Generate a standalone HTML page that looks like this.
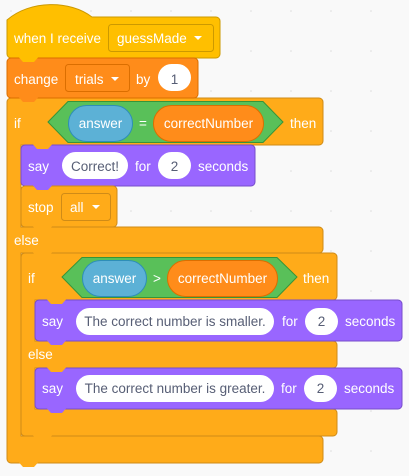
<!DOCTYPE html>
<html><head><meta charset="utf-8"><style>
html,body{margin:0;padding:0;background:#f9f9f9;}
svg{display:block;font-family:"Liberation Sans",Arial,sans-serif;font-size:13.5px;}
.w{fill:#fff;}
.d{fill:#575e75;}
</style></head><body>
<svg width="409" height="476" viewBox="0 0 409 476" xmlns="http://www.w3.org/2000/svg">
<defs>
<pattern id="dots" width="40" height="40" patternUnits="userSpaceOnUse" x="10" y="10">
<circle cx="1" cy="1" r="0.8" fill="#dcdcdc"/>
</pattern>
</defs>
<rect width="409" height="476" fill="#f9f9f9"/>
<rect width="409" height="476" fill="url(#dots)"/>

<path d="M7 102 a4 4 0 0 1 4 -4 H319 a4 4 0 0 1 4 4 V141 a4 4 0 0 1 -4 4 H21 V227 H319 a4 4 0 0 1 4 4 V249 a4 4 0 0 1 -4 4 H21 V436 H319 a4 4 0 0 1 4 4 V459 a4 4 0 0 1 -4 4 H11 a4 4 0 0 1 -4 -4 Z" fill="#FFAB19" stroke="#CF8B17"/>
<path d="M21 257 a4 4 0 0 1 4 -4 H333 a4 4 0 0 1 4 4 V296 a4 4 0 0 1 -4 4 H35 V341 H333 a4 4 0 0 1 4 4 V364 a4 4 0 0 1 -4 4 H35 V409 H333 a4 4 0 0 1 4 4 V432 a4 4 0 0 1 -4 4 H25 a4 4 0 0 1 -4 -4 Z" fill="#FFAB19" stroke="#CF8B17"/>

<path d="M7 20 C30 0 70 0 92 17 H216 a4 4 0 0 1 4 4 V54 a4 4 0 0 1 -4 4 H11 a4 4 0 0 1 -4 -4 Z" fill="#FFBF00" stroke="#CC9900"/>
<rect x="7" y="58" width="191" height="40" rx="4" fill="#FF8C1A" stroke="#DB6E00"/>
<rect x="21" y="145" width="234" height="41" rx="4" fill="#9966FF" stroke="#774DCB"/>
<rect x="21" y="186" width="96" height="41" rx="4" fill="#FFAB19" stroke="#CF8B17"/>
<rect x="35" y="300" width="367" height="41" rx="4" fill="#9966FF" stroke="#774DCB"/>
<rect x="35" y="368" width="367" height="41" rx="4" fill="#9966FF" stroke="#774DCB"/>

<path d="M19 57.5 L23 62 H34 L38 57.5 Z" fill="#FFBF00"/>
<path d="M19 97.5 L23 102 H34 L38 97.5 Z" fill="#FF8C1A"/>
<path d="M33 144.5 L37 149 H48 L52 144.5 Z" fill="#FFAB19"/>
<path d="M33 185.5 L37 190 H48 L52 185.5 Z" fill="#9966FF"/>
<path d="M33 226.5 L37 231 H48 L52 226.5 Z" fill="#FFAB19"/>
<path d="M33 252.5 L37 257 H48 L52 252.5 Z" fill="#FFAB19"/>
<path d="M47 299.5 L51 304 H62 L66 299.5 Z" fill="#FFAB19"/>
<path d="M47 340.5 L51 345 H62 L66 340.5 Z" fill="#9966FF"/>
<path d="M47 367.5 L51 372 H62 L66 367.5 Z" fill="#FFAB19"/>
<path d="M47 408.5 L51 413 H62 L66 408.5 Z" fill="#9966FF"/>
<path d="M33 435.5 L37 440 H48 L52 435.5 Z" fill="#FFAB19"/>
<path d="M19 462.5 L23 467 H34 L38 462.5 Z" fill="#FFAB19"/>

<text x="14" y="43" class="w">when I receive</text>
<rect x="108.5" y="24.5" width="105" height="27" rx="3" fill="#FFBF00" stroke="#CC9900"/>
<text x="117" y="43" class="w">guessMade</text>
<path d="M194 36 l4 4 l4 -4 z" fill="#fff"/>

<text x="14" y="84" class="w">change</text>
<rect x="65.5" y="64.5" width="64" height="27" rx="3" fill="#FF8C1A" stroke="#DB6E00"/>
<text x="75" y="84" class="w">trials</text>
<path d="M111 77 l4 4 l4 -4 z" fill="#fff"/>
<text x="136" y="84" class="w">by</text>
<rect x="158" y="64" width="33" height="27" rx="13.5" fill="#fff"/>
<text x="174.5" y="84" class="d" text-anchor="middle">1</text>

<text x="14" y="128" class="w">if</text>
<path d="M48 122 L68 101.5 H263 L283 122 L263 142.5 H68 Z" fill="#59C059" stroke="#389438"/>
<rect x="68.5" y="105.5" width="64" height="36" rx="18" fill="#5CB1D6" stroke="#2E8EB8"/>
<text x="100.5" y="128" class="w" text-anchor="middle">answer</text>
<text x="143" y="128" class="w" text-anchor="middle">=</text>
<rect x="153.5" y="105.5" width="110" height="36" rx="18" fill="#FF8C1A" stroke="#DB6E00"/>
<text x="208.5" y="128" class="w" text-anchor="middle">correctNumber</text>
<text x="290" y="128" class="w">then</text>

<text x="28" y="171" class="w">say</text>
<rect x="62" y="152" width="66" height="27" rx="13.5" fill="#fff"/>
<text x="95" y="171" class="d" text-anchor="middle">Correct!</text>
<text x="135" y="171" class="w">for</text>
<rect x="158" y="152" width="33" height="27" rx="13.5" fill="#fff"/>
<text x="174.5" y="171" class="d" text-anchor="middle">2</text>
<text x="198" y="171" class="w">seconds</text>

<text x="28" y="212" class="w">stop</text>
<rect x="61.5" y="193.5" width="49" height="27" rx="3" fill="#FFAB19" stroke="#CF8B17"/>
<text x="70" y="212" class="w">all</text>
<path d="M92 205 l4 4 l4 -4 z" fill="#fff"/>

<text x="14" y="245" class="w">else</text>

<text x="28" y="283" class="w">if</text>
<path d="M62 277 L82 257.5 H277 L297 277 L277 297.5 H82 Z" fill="#59C059" stroke="#389438"/>
<rect x="82.5" y="260.5" width="64" height="36" rx="18" fill="#5CB1D6" stroke="#2E8EB8"/>
<text x="114.5" y="283" class="w" text-anchor="middle">answer</text>
<text x="157" y="283" class="w" text-anchor="middle">&gt;</text>
<rect x="167.5" y="260.5" width="110" height="36" rx="18" fill="#FF8C1A" stroke="#DB6E00"/>
<text x="222.5" y="283" class="w" text-anchor="middle">correctNumber</text>
<text x="303" y="283" class="w">then</text>

<text x="42" y="326" class="w">say</text>
<rect x="76" y="308" width="198" height="27" rx="13.5" fill="#fff"/>
<text x="175" y="326" class="d" text-anchor="middle">The correct number is smaller.</text>
<text x="282" y="326" class="w">for</text>
<rect x="305" y="308" width="33" height="27" rx="13.5" fill="#fff"/>
<text x="321.5" y="326" class="d" text-anchor="middle">2</text>
<text x="345" y="326" class="w">seconds</text>

<text x="28" y="359" class="w">else</text>

<text x="42" y="393" class="w">say</text>
<rect x="76" y="375" width="198" height="27" rx="13.5" fill="#fff"/>
<text x="175" y="393" class="d" text-anchor="middle">The correct number is greater.</text>
<text x="281" y="393" class="w">for</text>
<rect x="304" y="375" width="33" height="27" rx="13.5" fill="#fff"/>
<text x="320.5" y="393" class="d" text-anchor="middle">2</text>
<text x="344" y="393" class="w">seconds</text>
</svg>
</body></html>
